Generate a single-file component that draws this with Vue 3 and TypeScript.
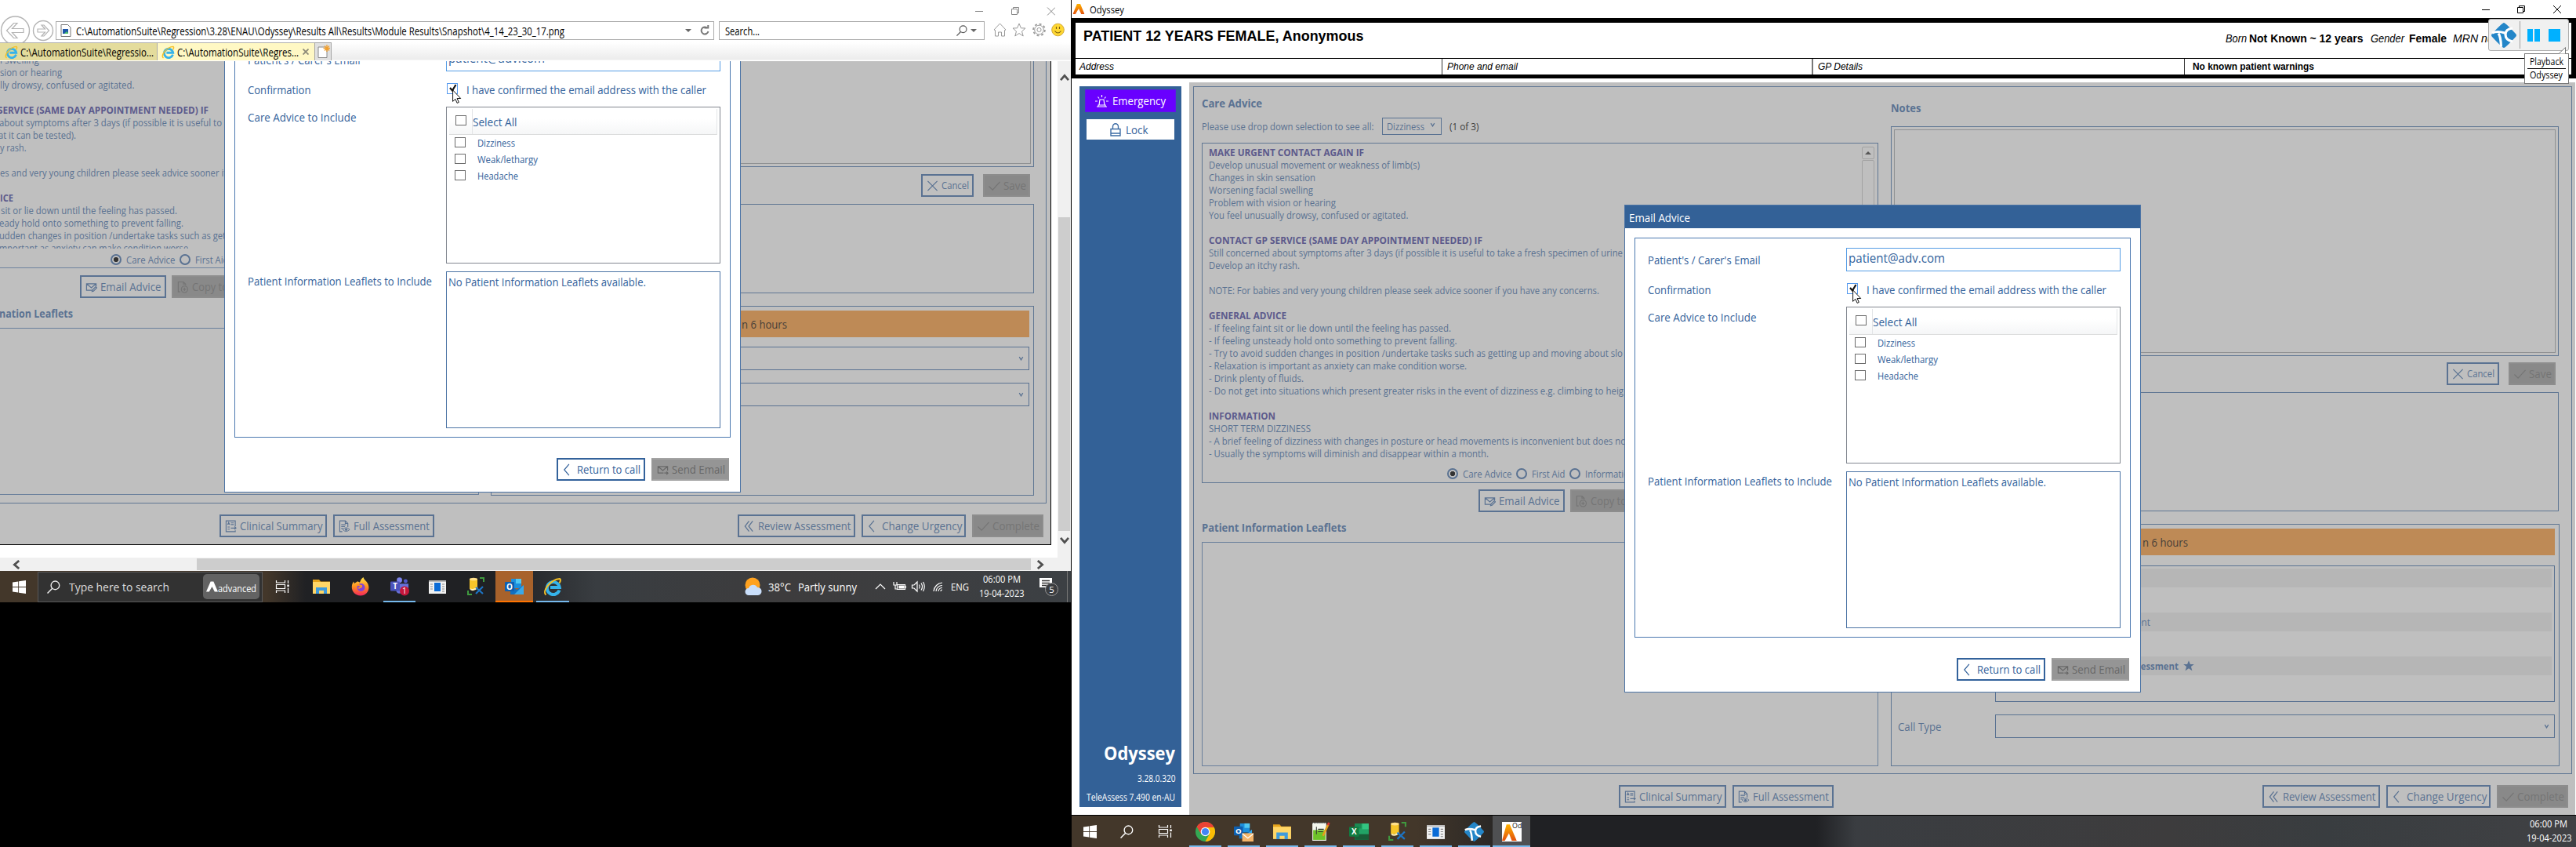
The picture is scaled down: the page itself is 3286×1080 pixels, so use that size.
<script setup lang="ts">
interface Line { t: string; w?: number; b?: boolean; x?: number }
interface Btn { icon: string; t: string; w: number; tw: number; off?: boolean }
interface Task { icon: string; w: number; u?: boolean; active?: boolean; cls?: string }

// Condenses or widens a label so that it takes up exactly the given width.
const vFit = {
  mounted(el: HTMLElement, { value }: { value?: number }) {
    if (!value) return
    el.style.display = 'inline-block'
    const now = el.getBoundingClientRect().width
    el.style.transformOrigin = '0 50%'
    el.style.transform = `scaleX(${value / now})`
    el.style.marginRight = `${parseFloat(getComputedStyle(el).marginRight) + value - now}px`
  },
}

const advice: Line[] = [
  { t: 'MAKE URGENT CONTACT AGAIN IF', w: 198, b: true },
  { t: 'Develop unusual movement or weakness of limb(s)', w: 269 },
  { t: 'Changes in skin sensation', w: 136 },
  { t: 'Worsening facial swelling', w: 133 },
  { t: 'Problem with vision or hearing', w: 162 },
  { t: 'You feel unusually drowsy, confused or agitated.', w: 254.5 },
  { t: '' },
  { t: 'CONTACT GP SERVICE (SAME DAY APPOINTMENT NEEDED) IF', w: 349, b: true },
  { t: 'Still concerned about symptoms after 3 days (if possible it is useful to take a fresh specimen of urine', w: 528 },
  { t: 'Develop an itchy rash.', w: 116 },
  { t: '' },
  { t: 'NOTE: For babies and very young children please seek advice sooner if you have any concerns.', w: 498 },
  { t: '' },
  { t: 'GENERAL ADVICE', w: 99, b: true },
  { t: '- If feeling faint sit or lie down until the feeling has passed.', w: 309 },
  { t: '- If feeling unsteady hold onto something to prevent falling.', w: 316.5 },
  { t: '- Try to avoid sudden changes in position /undertake tasks such as getting up and moving about slo', w: 528 },
  { t: '- Relaxation is important as anxiety can make condition worse.', w: 329 },
  { t: '- Drink plenty of fluids.', w: 121 },
  { t: '- Do not get into situations which present greater risks in the event of dizziness e.g. climbing to heig', w: 529 },
  { t: '' },
  { t: 'INFORMATION', w: 85, b: true },
  { t: 'SHORT TERM DIZZINESS', w: 130 },
  { t: '- A brief feeling of dizziness with changes in posture or head movements is inconvenient but does no', w: 532 },
  { t: '- Usually the symptoms will diminish and disappear within a month.', w: 357 },
]
const snap: Line[] = [
  { t: 'l swelling', w: 50, x: 0 },
  { t: 'sion or hearing', w: 79, x: 0 },
  { t: 'lly drowsy, confused or agitated.', w: 171.5, x: 0 },
  { t: '' },
  { t: 'SERVICE (SAME DAY APPOINTMENT NEEDED) IF', w: 269, b: true, x: -3 },
  { t: 'about symptoms after 3 days (if possible it is useful to', w: 284, x: -1 },
  { t: 'at it can be tested).', w: 99, x: -2 },
  { t: 'y rash.', w: 33.5, x: 0 },
  { t: '' },
  { t: 'es and very young children please seek advice sooner if', w: 289, x: 0 },
  { t: '' },
  { t: 'ICE', w: 17, b: true, x: 0 },
  { t: 'sit or lie down until the feeling has passed.', w: 225, x: 1 },
  { t: 'eady hold onto something to prevent falling.', w: 235, x: -1 },
  { t: 'udden changes in position /undertake tasks such as get', w: 289, x: -1 },
  { t: 'mportant as anxiety can make condition worse.', w: 244, x: -1 },
]
const footL: Btn[] = [
  { icon: 'summary', t: 'Clinical Summary', w: 137, tw: 105.5 },
  { icon: 'full', t: 'Full Assessment', w: 129, tw: 97 },
]
const footR: Btn[] = [
  { icon: 'dbl', t: 'Review Assessment', w: 150, tw: 118.5 },
  { icon: 'chev', t: 'Change Urgency', w: 133, tw: 102.5 },
  { icon: 'check', t: 'Complete', w: 91, tw: 60, off: true },
]
const noteBtns: Btn[] = [
  { icon: 'x', t: 'Cancel', w: 67, tw: 35 },
  { icon: 'check', t: 'Save', w: 60, tw: 29, off: true },
]
const advBtns: Btn[] = [
  { icon: 'mailedit', t: 'Email Advice', w: 110, tw: 77.5 },
  { icon: 'copy', t: 'Copy to', w: 90, tw: 46, off: true },
]
const modalBtns: Btn[] = [
  { icon: 'chev', t: 'Return to call', w: 113, tw: 81 },
  { icon: 'send', t: 'Send Email', w: 99, tw: 68, off: true },
]
const items: Line[] = [
  { t: 'Dizziness', w: 48 },
  { t: 'Weak/lethargy', w: 77 },
  { t: 'Headache', w: 52 },
]
const modals = ['snapshot', 'live']
const tasksL: Task[] = [
  { icon: 'taskview', w: 50 },
  { icon: 'folder', w: 50 },
  { icon: 'firefox', w: 50 },
  { icon: 'teams', w: 49, u: true },
  { icon: 'winapp', w: 48 },
  { icon: 'dbtool', w: 50 },
  { icon: 'outlook', w: 48, cls: 'alert' },
  { icon: 'ie', w: 50, u: true },
]
const tasksR: Task[] = [
  { icon: 'chrome', w: 49, u: true },
  { icon: 'outlookmail', w: 49, u: true },
  { icon: 'folder', w: 49, u: true },
  { icon: 'notepad', w: 49, u: true },
  { icon: 'excel', w: 49, u: true },
  { icon: 'dbtool', w: 49, u: true },
  { icon: 'winapp', w: 49, u: true },
  { icon: 'tc', w: 49, u: true },
  { icon: 'odyssey', w: 48, cls: 'current' },
]
</script>

<template>
  <div class="desk">
    <svg class="defs" width="0" height="0">
      <defs>
        <linearGradient id="orangeG" x1="0" y1="0" x2="0" y2="1"><stop offset="0" stop-color="#ffb400" /><stop offset="1" stop-color="#e2500d" /></linearGradient>
        <linearGradient id="fireG" x1="0" y1="0" x2="0" y2="1"><stop offset="0" stop-color="#ffe14a" /><stop offset=".5" stop-color="#ff9220" /><stop offset="1" stop-color="#f5255c" /></linearGradient>
        <symbol id="i-mailedit" viewBox="0 0 16 16"><path d="M9 12.5H1.5v-9h13V7M1.5 3.5 8 9l6.500-5.500M9 14l.5-2 4.500-4.500 1.500 1.500-4.500 4.500z" fill="none" stroke="currentColor" stroke-width="1.300" /></symbol>
        <symbol id="i-send" viewBox="0 0 16 16"><path d="M9 12.500H1.500v-9h13V9M1.500 3.500 8 9l6.500-5.500M10 12.500h5M13 10.500l2 2-2 2" fill="none" stroke="currentColor" stroke-width="1.300" /></symbol>
        <symbol id="i-copy" viewBox="0 0 16 16"><path d="M4 14.500H1.500V1h7l3 3v1.500M8.500 1v3h3" fill="none" stroke="currentColor" stroke-width="1.200" /><circle cx="10" cy="11" r="4.400" fill="none" stroke="currentColor" stroke-width="1.200" /><path d="M10 8.800v4.400M7.800 11h4.400" stroke="currentColor" stroke-width="1.200" /></symbol>
        <symbol id="i-summary" viewBox="0 0 16 16"><path d="M14 8V.700H1.500v14.600H14V13.500M3.500 6 5 2.800 6.500 6M4 5h2M8 3.500h4M8 5.700h4M3.500 9h3M3.500 12h3M8 10.500h7M13 8.500l2 2-2 2" fill="none" stroke="currentColor" stroke-width="1.200" /></symbol>
        <symbol id="i-full" viewBox="0 0 16 16"><path d="M5 15.300H1.500V.700h7.500l3.500 3.500V9M9 .700v3.500h3.500M3.500 6h6M3.500 8.500h5M3.500 11h2.500" fill="none" stroke="currentColor" stroke-width="1.200" /><path d="M5.500 12.500q4.500-5 9.500 0q-5 5-9.500 0z" fill="none" stroke="currentColor" /><circle cx="10.200" cy="12.500" r="1.700" fill="currentColor" /></symbol>
        <symbol id="i-dbl" viewBox="0 0 16 16"><path d="M8 1 2.500 8 8 15M13 1 7.500 8l5.500 7" fill="none" stroke="currentColor" stroke-width="1.300" /></symbol>
        <symbol id="i-chev" viewBox="0 0 16 16"><path d="M9.500.500 3 8l6.500 7.500" fill="none" stroke="currentColor" stroke-width="1.300" /></symbol>
        <symbol id="i-check" viewBox="0 0 16 16"><path d="M.5 8.500 5.500 13.500 15.500 2.500" fill="none" stroke="currentColor" stroke-width="1.300" /></symbol>
        <symbol id="i-x" viewBox="0 0 16 16"><path d="M1.500 1.500l13 13M14.500 1.500l-13 13" fill="none" stroke="currentColor" stroke-width="1.300" /></symbol>
        <symbol id="i-a" viewBox="0 0 16 16"><path d="M5.700 1h4.500L16 15h-4.500L8 7.500 3.500 15H0z" fill="url(#orangeG)" /></symbol>
        <symbol id="i-ie" viewBox="0 0 24 24"><path d="M20.500 16.500A8 8 0 1 1 20.800 13H9" fill="none" stroke="#35b3ea" stroke-width="4" /><path d="M3.500 22.500C-2 18 9 3 21 2c2 1 .5 4-.5 5.500" fill="none" stroke="#f5c026" stroke-width="2" /></symbol>
        <symbol id="i-start" viewBox="0 0 16 16"><path d="M0 2.300 6.800 1.300V7.600H0zM7.600 1.200 16 0V7.600H7.600zM0 8.400h6.800v6.300L0 13.700zM7.600 8.400H16V16l-8.400-1.200z" fill="#fff" /></symbol>
        <symbol id="i-mag" viewBox="0 0 16 16"><circle cx="9.800" cy="6" r="5" fill="none" stroke="currentColor" stroke-width="1.300" /><path d="M6.300 9.700.500 15.500" stroke="currentColor" stroke-width="1.400" /></symbol>
        <symbol id="i-taskview" viewBox="0 0 24 24"><path d="M4.500 4v3h11V4M4.500 20v-3h11v3M4.500 9.500h11v5h-11zM19.500 4v4M19.500 13.500V20" fill="none" stroke="#fff" stroke-width="1.200" /><rect x="18.300" y="9.500" width="2.500" height="2.500" fill="#fff" /></symbol>
        <symbol id="i-folder" viewBox="0 0 24 24"><path d="M1 3h8l2 2.500h12V8H1z" fill="#e6a41c" /><path d="M1 6h22v15H1z" fill="#ffd667" /><path d="M5 21v-8h14v8h-4v-4H9v4z" fill="#3f9bdc" /></symbol>
        <symbol id="i-firefox" viewBox="0 0 24 24"><path d="M12 23.500C5 23.500.500 18 .800 12c.100-3 1.500-5.500 2.200-6.500l1 2.500 3-2c1-1 2 0 4 .500C12 3 14 1 15.500 0c.500 3 3.500 4.500 5 7 5 8-.500 16.500-8.500 16.500z" fill="url(#fireG)" /><circle cx="12.500" cy="13" r="5" fill="#8042d8" /><path d="M7 10c3-1 4 1 6 1 1 2-3 1.500-3.500 3.500" fill="none" stroke="#ff9220" stroke-width="2" /></symbol>
        <symbol id="i-teams" viewBox="0 0 26 26"><circle cx="12.500" cy="4" r="3.700" fill="#7b83eb" /><circle cx="21" cy="5.500" r="2.700" fill="#5059c9" /><path d="M8 9h17v8q-3 6-9 5Q8 24 8 18z" fill="#6670d8" /><rect x="0" y="6" width="13" height="13" rx="1" fill="#4b53bc" /><text x="6.500" y="16.300" font-family="Open Sans, sans-serif" font-weight="700" font-size="10.500" text-anchor="middle" fill="#fff">T</text><circle cx="19.500" cy="19" r="6.500" fill="#c4163a" /><text x="19.500" y="23" font-family="Open Sans, sans-serif" font-size="11" text-anchor="middle" fill="#fff">1</text></symbol>
        <symbol id="i-winapp" viewBox="0 0 24 24"><path d="M1 4h22v17H1z" fill="#f2f2f2" /><path d="M1 4h22v2H1z" fill="#bbb" /><path d="M8 7h8v11H8z" fill="#0a6bd6" /><path d="M3 9h3M3 12h3M3 15h3M18 9h3M18 12h3M18 15h3M18 18h3" stroke="#888" /></symbol>
        <symbol id="i-dbtool" viewBox="0 0 24 24"><path d="M4 2h10v13H4z" fill="#f6c529" /><ellipse cx="9" cy="2.500" rx="5" ry="1.800" fill="#ffe08a" /><path d="M5 15q4 3 9-2" stroke="#fff1b8" stroke-width="2" fill="none" /><path d="M17 1h5v5M2 17v5h5" fill="none" stroke="#3f9a3f" stroke-width="2" /><path d="m12 13 9 8M21 12l-9 9" stroke="#1d74c4" stroke-width="2.200" /></symbol>
        <symbol id="i-outlook" viewBox="0 0 24 24"><path d="M8 2h13v12H8z" fill="#1c8fdc" /><path d="M14 2h7v6h-7z" fill="#50c8f2" /><path d="M7 11l8.500 5L24 10v12H7z" fill="#1170c2" /><path d="M24 10v12H12z" fill="#39a9ea" /><rect x="0" y="6" width="12" height="12" rx="1" fill="#0f5fb0" /><text x="6" y="15.500" font-family="Open Sans, sans-serif" font-weight="700" font-size="10" text-anchor="middle" fill="#fff">O</text></symbol>
        <symbol id="i-outlookmail" viewBox="0 0 26 26"><svg x="0" y="0" width="24" height="24" viewBox="0 0 24 24"><use href="#i-outlook" /></svg><path d="M11 15h15v11H11z" fill="#f4b469" /><path d="M11 15.500l7.500 6 7.500-6" fill="none" stroke="#fff" stroke-width="1.300" /></symbol>
        <symbol id="i-chrome" viewBox="0 0 24 24"><circle cx="12" cy="12" r="12" fill="#34a853" /><path d="M12 12 1.600 6A12 12 0 0 1 22.400 6z" fill="#ea4335" /><path d="M12 6.500h10.700A12 12 0 0 1 12 24l5-9z" fill="#fbbc05" /><path d="M1.600 6 7 15l5-8.500H22.400A12 12 0 0 0 1.600 6z" fill="#ea4335" /><circle cx="12" cy="12" r="5.600" fill="#fff" /><circle cx="12" cy="12" r="4.400" fill="#4285f4" /></symbol>
        <symbol id="i-notepad" viewBox="0 0 24 24"><path d="M2 1h17v22H2z" fill="#f4f7ee" /><path d="M3 10h15v12H3z" fill="#6ec328" /><path d="M2 1h17" stroke="#444" stroke-dasharray="1 1" stroke-width="2" /><path d="M7 6v9M9 9h7M9 12h6" stroke="#333" /><path d="M21.500 3 15 17" stroke="#e5a01c" stroke-width="2.500" /><path d="M22.500 1 21 4" stroke="#d33" stroke-width="2.500" /></symbol>
        <symbol id="i-excel" viewBox="0 0 24 24"><path d="M7 2h17v20H7z" fill="#21a366" /><path d="M7 2h8v6H7z" fill="#1a8a53" /><path d="M16 2h8v7h-8z" fill="#33c481" /><path d="M7 15h17v7H7z" fill="#185c37" /><rect x="0" y="6" width="12" height="12" rx="1" fill="#107c41" /><text x="6" y="15.300" font-family="Open Sans, sans-serif" font-weight="700" font-size="9.500" text-anchor="middle" fill="#fff">X</text></symbol>
        <symbol id="i-tc" viewBox="0 0 32 32"><path d="M16 0Q18 0 31 14q2 2 0 4Q18 32 16 32T1 18q-2-2 0-4Q14 0 16 0z" fill="#2486c8" /><path d="M1 13q7-3 16 0M9 13.500q3 4 3.500 17M27 7q-9 1-9 8t9 9" fill="none" stroke="#fff" stroke-width="3.200" /></symbol>
        <symbol id="i-odyssey" viewBox="0 0 24 24"><path d="M0 0h24v24H0z" fill="#fff" /><path d="M5.500 3h4L18 23h-6L8.500 14 3.500 23H0z" fill="url(#orangeG)" /><text x="12.500" y="8" font-family="Open Sans, sans-serif" font-size="8.500" fill="#222">Od</text></symbol>
        <symbol id="i-down" viewBox="0 0 8 8"><path d="M1 1.500 4 6.500 7 1.500" fill="none" stroke="currentColor" stroke-width="1.700" /></symbol>
        <symbol id="i-arr" viewBox="0 0 12 12"><path d="M1 9.200 6 3.400l5 5.800" fill="none" stroke="#505050" stroke-width="2.800" /></symbol>
        <symbol id="i-cursor" viewBox="0 0 12 19"><path d="M.6.900v14.500l3.300-3.100 2.200 5.100 2.200-1-2.200-4.900h4.600z" fill="#fff" stroke="#111" stroke-width="1" /></symbol>
      </defs>
    </svg>

    <!-- snapshot viewer on the small monitor -->
    <section class="mon1">
      <header class="ie-top">
        <svg class="nav" width="70" height="54" viewBox="0 0 70 54" fill="none" stroke="#b4b4b4"><circle cx="19.500" cy="39" r="18" stroke-width="1.400" /><circle cx="55" cy="39" r="12.500" stroke-width="1.400" /><path d="M8.500 39l9-9.500h4.500l-6.500 7H30v5H15.500l6.500 7h-4.500zM62.500 39l-6.500-7h-3l4.500 5H48v4h9.500l-4.500 5h3z" stroke-width="1.200" /></svg>
        <div class="addr">
          <svg width="14" height="16" viewBox="0 0 14 16"><path d="M1 .500h8.500l3.500 3.500v11.500H1z" fill="#fff" stroke="#777" /><path d="M3 6h7v6H3z" fill="#1d56a8" /><path d="M5 12l3-3 2 2v1z" fill="#4fc36a" /></svg>
          <span v-fit="623" class="u15">C:\AutomationSuite\Regression\3.28\ENAU\Odyssey\Results All\Results\Module Results\Snapshot\4_14_23_30_17.png</span>
          <i class="tri"></i>
          <svg width="12" height="14" viewBox="0 0 12 14"><path d="M9.500 4A4.500 4.500 0 1 0 10.500 8M5.500 3.500h4.800V0" fill="none" stroke="#777" stroke-width="2" /></svg>
        </div>
        <div class="find"><span v-fit="44" class="u15">Search...</span><svg width="14" height="14" viewBox="0 0 16 16" color="#555"><use href="#i-mag" /></svg><i class="tri"></i></div>
        <div class="ie-right">
          <svg width="116" height="20" viewBox="0 0 116 20"><path d="M14 7.500h10" stroke="#888" fill="none" /><path d="M60.500 4.500h7v7h-7zM62.500 4.500v-2h7v7h-2M106 2.500l10 10M116 2.500l-10 10" fill="none" stroke="#888" /></svg>
          <svg width="92" height="20" viewBox="0 0 92 20" fill="none" stroke="#999"><path d="M1 10 8.500 2 16 10l-1.500.500V18h-4v-5h-4v5h-4v-7.500zM33 2l2.400 5.800 5.600.200-4.500 4 1.700 6-5.200-3.500-5.200 3.500 1.700-6-4.500-4 5.600-.200z" /><circle cx="58.500" cy="10" r="5.800" /><circle cx="58.500" cy="10" r="2.600" /><circle cx="58.500" cy="10" r="7.400" stroke-dasharray="2.900 2.900" stroke-width="1.800" /><circle cx="82.500" cy="10" r="7.800" fill="#ffd832" stroke="#d2a93a" /><path d="M80.500 6v3M84.500 6v3M78.500 11.500q4 5 8 0" stroke="#7a5c10" stroke-width="1.200" /></svg>
        </div>
      </header>
      <div class="tabs">
        <div class="tab t1"><svg width="17" height="17" viewBox="0 0 24 24"><use href="#i-ie" /></svg><span v-fit="170" class="u15">C:\AutomationSuite\Regressio...</span></div>
        <div class="tab t2"><svg width="17" height="17" viewBox="0 0 24 24"><use href="#i-ie" /></svg><span v-fit="155" class="u15">C:\AutomationSuite\Regres...</span><svg class="cx" width="8" height="8" viewBox="0 0 8 8"><path d="M.500.500l7 7M7.500.500l-7 7" stroke="#8d8a78" stroke-width="1.800" /></svg></div>
        <div class="tab t3"><svg width="16" height="18" viewBox="0 0 16 18"><path d="M1 3h9l2 2v11.500H1z" fill="#fff" stroke="#888" /><path d="M12 0v9M7.500 4.500h9M9 1.500l6 6M15 1.500l-6 6" stroke="#f0a030" stroke-width="1.300" /></svg></div>
      </div>
      <div class="ie-body">
        <div class="shot">
          <div class="spanel">
            <div class="sl">
              <div class="sbox1">
                <div class="stext"><p v-for="(l, i) in snap" :key="i" :class="{ b: l.b }"><span v-fit="l.w" :style="{ marginLeft: (l.x || 0) + 'px' }">{{ l.t }}</span></p></div>
                <div class="radios s"><i class="rd on"></i><span v-fit="62.500">Care Advice</span><i class="rd"></i><span v-fit="42.500">First Aid</span></div>
              </div>
              <div class="btns sadv"><div v-for="b in advBtns" :key="b.t" class="btn dim" :class="{ off: b.off }" :style="{ width: b.w + 'px' }"><svg><use :href="'#i-' + b.icon" /></svg><span v-fit="b.tw">{{ b.t }}</span></div></div>
              <div class="sh"><span v-fit="94">nation Leaflets</span></div>
              <div class="sbox2"></div>
            </div>
            <div class="sr">
              <div class="snote"><div></div></div>
              <div class="btns snb"><div v-for="b in noteBtns" :key="b.t" class="btn dim" :class="[b.icon, { off: b.off }]" :style="{ width: b.w + 'px' }"><svg><use :href="'#i-' + b.icon" /></svg><span v-fit="b.tw">{{ b.t }}</span></div></div>
              <div class="sbox3"></div>
              <div class="sbox4">
                <div class="orange"><span v-fit="58">n 6 hours</span></div>
                <div class="combo"><svg><use href="#i-down" /></svg></div>
                <div class="combo c2"><svg><use href="#i-down" /></svg></div>
              </div>
            </div>
          </div>
          <div class="foot sf">
            <div class="btns"><div v-for="b in footL" :key="b.t" class="btn dim" :style="{ width: b.w + 'px' }"><svg><use :href="'#i-' + b.icon" /></svg><span v-fit="b.tw">{{ b.t }}</span></div></div>
            <div class="btns"><div v-for="b in footR" :key="b.t" class="btn dim" :class="{ off: b.off }" :style="{ width: b.w + 'px' }"><svg><use :href="'#i-' + b.icon" /></svg><span v-fit="b.tw">{{ b.t }}</span></div></div>
          </div>
        </div>
        <div class="vscroll"><svg><use href="#i-arr" /></svg><div></div><svg class="dn"><use href="#i-arr" /></svg></div>
      </div>
      <div class="hscroll"><svg class="lf"><use href="#i-arr" /></svg><div></div><svg class="rt"><use href="#i-arr" /></svg></div>
      <div class="bar bar1">
        <div class="start"><svg width="17" height="17"><use href="#i-start" /></svg></div>
        <div class="sbar"><svg width="17" height="17"><use href="#i-mag" /></svg><span v-fit="128">Type here to search</span><div class="pill"><svg width="15" height="14" viewBox="0 0 16 14"><path d="M6 0h4l6 14h-4.500L8 7l-4 7H0z" fill="#fff" /></svg><b v-fit="49">advanced</b></div></div>
        <div v-for="k in tasksL" :key="k.icon" class="task" :class="[k.cls, { u: k.u }]" :style="{ width: k.w + 'px' }"><svg width="24" height="24"><use :href="'#i-' + k.icon" /></svg></div>
        <div class="tray">
          <svg width="24" height="24" viewBox="0 0 24 24"><circle cx="11" cy="10" r="9.500" fill="#ffa21f" /><path d="M6 23a4.500 4.500 0 0 1 0-9 6 6 0 0 1 11-1 5 5 0 0 1 1 10z" fill="#c9defa" /></svg>
          <span v-fit="29" class="w1">38°C</span><span v-fit="75" class="w2">Partly sunny</span>
          <svg class="sys" width="90" height="20" viewBox="0 0 90 20" fill="none" stroke="#fff" stroke-width="1.200"><path d="M1 13l6-6 6 6" /><path d="M28.500 7.500h10v6h-10zM39.500 9.500v2M24 4v4h4V4M26 8v5h2" /><path d="M31 9h6v3h-6z" fill="#fff" /><path d="M47.500 8v4h2.500l4 4V4L50 8zM56.500 7.500q1.500 2.500 0 5M59 5.500q3 4.500 0 9M61.500 4q3.500 6 0 12" /><path d="M75 16a12 12 0 0 1 11-11M78 16a8 8 0 0 1 8-7.500M81 16a5 5 0 0 1 5-4.500M84 16a2 2 0 0 1 2-2" /></svg>
          <span v-fit="23" class="eng">ENG</span>
          <div class="clock"><span v-fit="48">06:00 PM</span><span v-fit="57.500">19-04-2023</span></div>
          <svg class="nt" width="26" height="28" viewBox="0 0 26 28"><path d="M1 3h16v12h-5v4l-4-4H1z" fill="#fff" /><path d="M4 6.500h10M4 9.500h10M4 12.500h7" stroke="#333" stroke-width="1.300" /><circle cx="16.500" cy="17.500" r="8" fill="#3a3c3f" stroke="#999" /><text x="16.500" y="22" font-size="11.500" text-anchor="middle" fill="#fff" font-family="Open Sans, sans-serif">5</text></svg>
        </div>
      </div>
    </section>

    <!-- live application on the main monitor -->
    <section class="mon2">
      <div class="title"><svg width="16" height="15" viewBox="0 0 16 16"><use href="#i-a" /></svg><span v-fit="44">Odyssey</span>
        <svg class="wc" width="110" height="20" viewBox="0 0 110 20" fill="none" stroke="#000"><path d="M1 10.500h10M46.500 7.500h7v7h-7zM48.500 7.500v-2h7v7h-2M92 5l10 10M102 5l-10 10" /></svg>
      </div>
      <div class="banner">
        <div class="b1"><b v-fit="357.500" class="pt">PATIENT 12 YEARS FEMALE, Anonymous</b>
          <div class="demo"><em v-fit="27">Born</em><b v-fit="145.500">Not Known ~ 12 years</b><em v-fit="43" class="g">Gender</em><b v-fit="48" class="f">Female</b><em v-fit="84" class="g2">MRN number</em></div></div>
        <div class="b2"><div class="c1"><em v-fit="44">Address</em></div><div class="c2"><em v-fit="90">Phone and email</em></div><div class="c3"><em v-fit="57">GP Details</em></div><div class="c4"><b v-fit="155">No known patient warnings</b></div></div>
      </div>
      <div class="work">
        <aside>
          <div class="emer"><svg width="17" height="16" viewBox="0 0 17 16" fill="none" stroke="#fff" stroke-width="1.200"><path d="M2 15h13M4 15v-2h9v2M5 13l1-7h5l1 7M8.500 0v3M3.500 2.500l1.500 2M13.500 2.500l-1.500 2M0 8h3M14 8h3" /></svg><span v-fit="68">Emergency</span></div>
          <div class="lock"><svg width="14" height="17" viewBox="0 0 14 17" fill="none" stroke="#3d6ca5" stroke-width="1.400"><path d="M1 7.500h12V16H1zM3.500 7.500V4.500a3.500 3.800 0 0 1 7 0v3M1 13h12" /></svg><span v-fit="28.500">Lock</span></div>
          <div class="ver"><b v-fit="91">Odyssey</b><span v-fit="48.500">3.28.0.320</span><span v-fit="113">TeleAssess 7.490 en-AU</span></div>
        </aside>
        <main>
          <div class="panel">
            <div class="pl">
              <div class="h1"><span v-fit="77">Care Advice</span></div>
              <div class="pick"><span v-fit="219.500">Please use drop down selection to see all:</span><div class="dd"><span v-fit="48">Dizziness</span><svg><use href="#i-down" /></svg></div><span v-fit="37.500" class="of">(1 of 3)</span></div>
              <div class="abox">
                <div class="arow"><div class="atext"><p v-for="(l, i) in advice" :key="i" :class="{ b: l.b }"><span v-fit="l.w">{{ l.t }}</span></p></div>
                  <div class="asb"><div class="up"><i></i></div><div class="tr"></div></div></div>
                <div class="radios"><i class="rd on"></i><span v-fit="62.500">Care Advice</span><i class="rd"></i><span v-fit="42.500">First Aid</span><i class="rd"></i><span v-fit="63">Information</span></div>
              </div>
              <div class="btns adv"><div v-for="b in advBtns" :key="b.t" class="btn dim" :class="{ off: b.off }" :style="{ width: b.w + 'px' }"><svg><use :href="'#i-' + b.icon" /></svg><span v-fit="b.tw">{{ b.t }}</span></div></div>
              <div class="h2"><span v-fit="184.500">Patient Information Leaflets</span></div>
              <div class="lbox"></div>
            </div>
            <div class="pr">
              <div class="h3"><span v-fit="38.500">Notes</span></div>
              <div class="nbox"><div></div></div>
              <div class="btns nb"><div v-for="b in noteBtns" :key="b.t" class="btn dim" :class="[b.icon, { off: b.off }]" :style="{ width: b.w + 'px' }"><svg><use :href="'#i-' + b.icon" /></svg><span v-fit="b.tw">{{ b.t }}</span></div></div>
              <div class="box2"></div>
              <div class="box3">
                <div class="orange"><span v-fit="58">n 6 hours</span></div>
                <div class="list"><div class="st"></div><div></div><div class="st"><span v-fit="18">ent</span></div><div></div><div class="st"><b v-fit="54">sessment</b><svg width="14" height="14" viewBox="0 0 14 14"><path d="M7 .300 8.900 5h4.900L9.900 8l1.500 5.300L7 10.200l-4.400 3.100L4.100 8 .200 5h4.900z" fill="#5a7292" /></svg></div></div>
                <div class="ct"><span v-fit="55.500">Call Type</span><div class="combo"><svg><use href="#i-down" /></svg></div></div>
              </div>
            </div>
          </div>
          <div class="foot mf">
            <div class="btns"><div v-for="b in footL" :key="b.t" class="btn dim" :style="{ width: b.w + 'px' }"><svg><use :href="'#i-' + b.icon" /></svg><span v-fit="b.tw">{{ b.t }}</span></div></div>
            <div class="btns"><div v-for="b in footR" :key="b.t" class="btn dim" :class="{ off: b.off }" :style="{ width: b.w + 'px' }"><svg><use :href="'#i-' + b.icon" /></svg><span v-fit="b.tw">{{ b.t }}</span></div></div>
          </div>
        </main>
      </div>
      <div class="bar bar2">
        <div class="start"><svg width="17" height="17"><use href="#i-start" /></svg></div>
        <div class="start sm"><svg width="17" height="17"><use href="#i-mag" /></svg></div>
        <div class="start tv"><svg width="24" height="24"><use href="#i-taskview" /></svg></div>
        <div v-for="k in tasksR" :key="k.icon" class="task" :class="[k.cls, { u: k.u }]" :style="{ width: k.w + 'px' }"><svg width="25" height="25"><use :href="'#i-' + k.icon" /></svg></div>
        <div class="clock"><span v-fit="48">06:00 PM</span><span v-fit="57.500">19-04-2023</span></div>
      </div>
    </section>

    <!-- e-mail dialog, drawn over each window -->
    <div v-for="m in modals" :key="m" class="clip" :class="m">
      <div class="modal">
        <div class="mh"><span v-fit="78">Email Advice</span></div>
        <div class="mb">
          <div class="r email"><label><span v-fit="143.500">Patient's / Carer's Email</span></label><div class="inp"><span v-fit="123">patient@adv.com</span></div></div>
          <div class="r conf"><label><span v-fit="80.500">Confirmation</span></label><div class="cb sel"><svg class="tick" width="12" height="11" viewBox="0 0 12 11"><path d="M2 5l3 3.500L9.500 1" fill="none" stroke="#111" stroke-width="2.200" /></svg><svg class="cur" width="12" height="19"><use href="#i-cursor" /></svg></div><span v-fit="306">I have confirmed the email address with the caller</span></div>
          <div class="r care"><label><span v-fit="138.500">Care Advice to Include</span></label>
            <div class="lst"><div class="lh"><div><i class="cb"></i></div><span v-fit="56.500">Select All</span></div>
              <div v-for="it in items" :key="it.t" class="li"><i class="cb"></i><span v-fit="it.w">{{ it.t }}</span></div></div></div>
          <div class="r leaf"><label><span v-fit="235">Patient Information Leaflets to Include</span></label><div class="pil"><span v-fit="252">No Patient Information Leaflets available.</span></div></div>
        </div>
        <div class="btns mf2"><div v-for="b in modalBtns" :key="b.t" class="btn" :class="{ off: b.off }" :style="{ width: b.w + 'px' }"><svg><use :href="'#i-' + b.icon" /></svg><span v-fit="b.tw">{{ b.t }}</span></div></div>
      </div>
    </div>

    <!-- playback recorder widget -->
    <div class="rec"><svg width="32" height="32"><use href="#i-tc" /></svg><div class="sep"></div><i class="ps"></i><i class="ps"></i><i class="stop"></i></div>
    <div class="tip"><svg width="10" height="9" viewBox="0 0 10 9"><path d="M0 8.500 8.500.500v8" fill="#fff" stroke="#777" /></svg><span v-fit="43">Playback</span><div></div><span v-fit="42">Odyssey</span></div>
  </div>
</template>

<style>
body { background: #000; }
</style>

<style scoped>
.desk { width: 3286px; height: 1080px; display: flex; background: #000; position: relative; overflow: hidden; font-family: "Open Sans", "Noto Sans", sans-serif; font-size: 14px; color: #33629b; white-space: nowrap; }
.desk * { box-sizing: border-box; }
.desk svg { flex: none; display: block; }
.desk span, .desk b, .desk em { flex: none; }
.defs { position: absolute; }
p { margin: 0; }
.u15 { font-size: 14.500px; color: #000; }

.mon1 { width: 1366px; height: 768px; background: #fff; flex: none; overflow: hidden; }
.ie-top { height: 54px; display: flex; }
.nav { margin-right: 1px; }
.addr { width: 840px; height: 24px; margin-top: 27px; border: 1px solid #ababab; display: flex; align-items: center; padding-left: 5px; }
.addr span { margin-left: 6px; }
.addr .tri { margin-left: auto; margin-right: 11px; }
.addr svg:last-child { margin-right: 5px; }
.tri { border: 4px solid transparent; border-top-color: #666; border-bottom: 0; width: 8px; height: 4px; flex: none; }
.find { width: 339px; height: 24px; margin: 27px 0 0 6px; border: 1px solid #ababab; display: flex; align-items: center; padding-left: 7px; }
.find svg { margin-left: auto; margin-right: 4px; }
.find .tri { margin-right: 9px; }
.ie-right { width: 109px; padding-top: 7px; display: flex; flex-direction: column; align-items: flex-start; }
.ie-right svg:first-child { margin-left: -26px; }
.ie-right svg:last-child { margin: 1px 0 0 11px; }
.tabs { height: 24px; display: flex; background: linear-gradient(#fff, #ececec 90%, #fff 96%); }
.tab { height: 23px; display: flex; align-items: center; padding-left: 6px; border-top: 1px solid #b0b0b0; }
.tab span { margin-left: 3px; }
.t1 { width: 200px; background: #e4dc9c; }
.t2 { width: 201px; background: #fff8c4; border-left: 1px solid #aaa; padding-left: 5px; }
.cx { margin-left: 5px; }
.t3 { width: 22px; background: #e0e0e0; border: 1px solid #a5a5a5; border-bottom: 0; padding-left: 3px; }
.ie-body { display: flex; height: 633px; }
.shot { width: 1341px; height: 617px; background: #bfbfbf; border-right: 1px solid #000; border-bottom: 1px solid #000; overflow: hidden; color: #5a7292; }
.spanel { width: 1335px; height: 564px; border: solid #5f7693; border-width: 0 1px 1px 0; display: flex; }
.sl { width: 611px; flex: none; }
.sbox1 { height: 264px; border-bottom: 1px solid #6f849f; }
.stext { height: 239px; overflow: hidden; font-size: 12.500px; }
.stext p { height: 16px; line-height: 16px; position: relative; top: -9px; }
.stext p, .atext p { display: flex; }
.b { font-weight: 700; color: #5c5a8c; font-size: 12px; }
.radios { display: flex; align-items: center; height: 22px; font-size: 12.500px; }
.radios.s { margin-left: 141px; margin-top: 3px; }
.rd { width: 14px; height: 14px; border: 2px solid #5a7292; border-radius: 50%; flex: none; margin-right: 6px; }
.rd.on { background: radial-gradient(#333 0 2.800px, transparent 3.500px); }
.radios span { margin-right: 5.500px; }
.btns { display: flex; gap: 8px; }
.btn { height: 29px; border: 2px solid #33629b; display: flex; align-items: center; flex: none; padding-left: 5px; }
.btn svg { width: 15px; height: 16px; margin-right: 4px; }
.btn.dim { border-color: #5a7292; color: #5a7292; }
.btn.off { background: #959595; border-color: #a3a3a3 #979797; color: #686868; }
.btn.dim.off { background: #898989; border: 2px solid #8d8d8d; color: #757575; }
.btn.x { font-size: 12.500px; }
.sadv { margin: 9px 0 0 102px; }
.adv, .sadv { gap: 7px; }
.sh { height: 38px; line-height: 39px; font-weight: 700; margin-left: -1px; }
.sbox2 { height: 213px; border: 1px solid #6a809c; border-left: 0; }
.sr { margin-left: 15px; width: 693px; }
.snote { height: 135px; border: solid #5f7693; border-width: 0 1px 1px 0; padding: 0 3px 3px 0; }
.snote div { height: 131px; border: solid #8f9193; border-width: 0 1px 1px 0; }
.snb { margin-top: 9px; height: 29px; justify-content: flex-end; padding-right: 5px; gap: 12px !important; }
.sbox3 { margin-top: 9px; height: 114px; border: 1px solid #5f7693; }
.sbox4 { margin-top: 16px; height: 242px; border: 1px solid #5f7693; padding: 5px; }
.orange { height: 34px; background: #be8a56; color: #474039; line-height: 36px; padding-left: 315px; }
.sbox4 .orange { padding-left: 314px; }
.combo { border: 1px solid #5a7292; height: 30px; display: flex; align-items: center; justify-content: flex-end; padding-right: 6px; color: #5a7292; }
.combo svg { width: 7px; height: 6px; }
.sbox4 .combo { margin-top: 12px; }
.sbox4 .c2 { margin-top: 16px; }
.foot { display: flex; justify-content: space-between; margin-top: 14px; }
.sf { padding: 0 9px 0 280px; }
.vscroll { width: 17px; margin-left: 8px; background: #f0f0f0; display: flex; flex-direction: column; align-items: center; }
.vscroll svg { width: 12px; height: 12px; margin-top: 15px; }
.vscroll div { width: 15px; height: 400px; margin-top: 172px; background: #cdcdcd; }
.vscroll .dn { transform: rotate(180deg); margin-top: 6px; }
.hscroll { height: 17px; background: #f0f0f0; display: flex; align-items: center; }
.hscroll svg { width: 12px; height: 12px; }
.hscroll .lf { transform: rotate(-90deg); margin-left: 15px; }
.hscroll div { width: 1064px; height: 15px; margin-left: 224px; background: #cdcdcd; }
.hscroll .rt { transform: rotate(90deg); margin-left: 6px; }
.bar { height: 40px; display: flex; align-items: center; color: #fff; }
.bar1 { background: linear-gradient(90deg, #43372a 0, #43372a 340px, #202124 390px, #202124 640px, #393d41 760px, #3d3c3d 1000px, #3c4044 1366px); }
.start { width: 48px; display: flex; justify-content: center; flex: none; }
.sbar { width: 287px; height: 39px; background: #323232; border: 1px solid #595959; display: flex; align-items: center; padding-left: 11px; color: #ededed; flex: none; font-size: 15px; }
.sbar > span { margin-left: 11px; color: #dcdcdc; }
.pill { width: 72px; height: 32px; margin-left: 43px; border-radius: 5px; background: #636363; display: flex; align-items: center; padding-left: 4px; font-size: 12px; }
.pill b { font-weight: 400; color: #fff; margin-top: 4px; }
.task { height: 40px; display: flex; align-items: center; justify-content: center; flex: none; position: relative; }
.task.u::after, .task.alert::after, .task.current::after { content: ""; position: absolute; left: 4px; right: 4px; bottom: 0; height: 2px; background: #76b9ed; }
.task.alert { background: #a8622b; }
.task.alert::after { left: 0; right: 0; background: #ff7300; }
.task.current { background: #4f5052; margin-left: -1px; }
.task.current::after { left: 0; right: 0; }
.tray { flex: 1; display: flex; align-items: center; padding-left: 219px; font-size: 14px; height: 40px; border-right: 1px solid #777; margin-right: 4px; }
.w1 { margin-left: 7px; }
.w2 { margin-left: 9px; }
.sys { margin-left: 23px; }
.eng { margin-left: 7px; font-size: 13px; }
.clock { display: flex; flex-direction: column; align-items: center; font-size: 12.500px; line-height: 18px; }
.tray .clock { margin-left: 13px; }
.nt { margin-left: 18px; }

.mon2 { width: 1920px; height: 1080px; background: #fff; flex: none; border-left: 1px solid #000; }
.title { height: 23px; display: flex; align-items: center; padding-left: 1px; color: #000; font-size: 12.500px; }
.title span { margin-left: 6px; margin-top: 2px; }
.wc { margin-left: auto; margin-right: 11px; }
.banner { height: 77px; border: solid #000; border-width: 6px 6px 5px 5px; color: #000; font-family: "Liberation Sans", Arial, sans-serif; }
.b1 { height: 45px; display: flex; line-height: 35px; }
.pt { font-size: 18px; margin-left: 10px; }
.demo { margin-left: 1099px; display: flex; font-size: 15px; line-height: 39px; }
.demo b { margin-left: 3px; }
.g { margin-left: 10px; }
.demo .f { margin-left: 6px; }
.g2 { margin-left: 8px; }
.b2 { height: 21px; border-top: 1px solid #000; display: flex; font-size: 13px; line-height: 20px; }
.b2 div { padding-left: 5px; }
.b2 .c1 { width: 467px; }
.b2 .c2 { width: 472px; border-left: 1px solid #333; padding-left: 6px; }
.b2 .c3 { width: 475px; border-left: 2px solid #777; padding-left: 6px; }
.b2 .c4 { border-left: 1px solid #333; padding-left: 10px; }
.work { height: 940px; display: flex; border-bottom: 1px solid #000; }
aside { width: 130px; height: 919px; margin: 10px 10px 0 10px; background: #336197; flex: none; display: flex; flex-direction: column; align-items: center; color: #fff; }
.emer { width: 116px; height: 29px; margin-top: 4px; background: #6900ff; border: 1px solid #5d16e8; display: flex; align-items: center; padding-left: 12px; gap: 5px; align-self: flex-start; margin-left: 7px; }
.lock { width: 112px; height: 26px; margin-top: 9px; background: #fff; color: #33629b; display: flex; align-items: center; padding-left: 30px; gap: 6px; }
.ver { margin-top: auto; align-self: stretch; display: flex; flex-direction: column; align-items: flex-end; padding-right: 8px; font-size: 12px; }
.ver b { font-size: 23px; line-height: 30px; margin-bottom: 6px; }
.ver span { line-height: 24px; }
main { width: 1768px; height: 934px; margin-top: 5px; padding-top: 5px; background: #bfbfbf; color: #5a7292; flex: none; }
.panel { width: 1759px; height: 877px; margin-left: 5px; border: 1px solid #5f7693; display: flex; padding-left: 10px; }
.pl { width: 863px; flex: none; }
.h1 { height: 39px; line-height: 42px; font-weight: 700; }
.pick { height: 22px; display: flex; align-items: center; font-size: 12.500px; }
.dd { width: 76px; height: 22px; border: 1px solid #5a7292; margin: 0 10px; display: flex; align-items: center; padding-left: 5px; }
.dd svg { width: 7px; height: 6px; margin: -4px 0 0 7px; }
.of { color: #3c3c3c; }
.abox { margin-top: 10px; height: 434px; border: 1px solid #5f7693; }
.arow { display: flex; justify-content: space-between; height: 410px; }
.atext { padding: 4px 0 0 8px; font-size: 12.500px; }
.atext p { height: 16px; line-height: 16px; }
.asb { width: 16px; margin: 4px 4px 0 0; }
.up { height: 16px; border: 1px solid #a2a2a2; border-radius: 2px; display: flex; align-items: center; justify-content: center; }
.up i { border: 4px solid transparent; border-bottom: 4px solid #555; border-top: 0; }
.tr { height: 380px; margin-top: 1px; border: 1px solid #a2a2a2; border-radius: 2px; }
.arow + .radios { margin-left: 312px; }
.adv { margin: 8px 0 0 353px; }
.h2 { height: 38px; line-height: 39px; font-weight: 700; }
.lbox { height: 286px; border: 1px solid #6a809c; }
.pr { width: 852px; margin-left: 16px; }
.h3 { height: 50px; line-height: 53px; font-weight: 700; }
.nbox { height: 293px; border: 1px solid #5f7693; padding: 3px; }
.nbox div { height: 285px; border: 1px solid #8f9193; }
.nb { height: 29px; margin-top: 8px; justify-content: flex-end; padding-right: 4px; gap: 12px !important; }
.box2 { height: 152px; margin-top: 9px; border: 1px solid #5f7693; }
.box3 { height: 309px; margin-top: 16px; width: 853px; border: 1px solid #5f7693; padding: 5px; }
.list { margin: 13px 0 0 127px; height: 174px; border: 1px solid #5a7292; padding: 3px; font-size: 12.500px; }
.list div { height: 28px; }
.list div:nth-child(2n) { height: 32px; }
.list .st { height: 24px; background: #b6b6b6; line-height: 25px; padding-left: 176px; display: flex; align-items: center; }
.st svg { margin-left: 6px; }
.ct { display: flex; align-items: center; margin-top: 16px; padding-left: 3px; }
.ct .combo { width: 714px; margin-left: auto; }
.mf { padding: 0 9px 0 548px; }
.bar2 { background: linear-gradient(90deg, #43372a 0, #43372a 440px, #202124 580px, #202124 950px, #3a3d41 1000px, #3d3c3d 1400px, #393d40 1600px, #404144 1920px); }
.sm { margin-left: -1px; }
.tv { width: 49px; }
.bar2 .start + .task { margin-left: 3px; }
.bar2 .start:first-child { width: 47px; }
.bar2 .clock { margin-left: auto; margin-right: 6px; }

.clip { position: absolute; overflow: hidden; width: 659px; }
.live { left: 2072px; top: 261px; height: 622px; }
.snapshot { left: 286px; top: 78px; height: 550px; }
.snapshot .modal { margin-top: -72px; }
.modal { width: 659px; height: 622px; background: #fff; border: 1px solid #4c74a5; }
.mh { height: 29px; background: #336197; color: #fff; line-height: 31px; padding-left: 5px; }
.mb { width: 633px; height: 510px; margin: 12px 0 0 12px; border: 1px solid #4c79b0; }
.r { display: flex; padding-left: 16px; }
.r label { width: 253px; flex: none; }
.email { height: 30px; margin-top: 12px; line-height: 31px; }
.inp { width: 350px; height: 30px; border: 1px solid #569de5; padding-left: 2px; font-size: 16.500px; line-height: 24px; }
.conf { height: 30px; margin-top: 8px; align-items: center; }
.cb { width: 14px; height: 13px; border: 1px solid #6b6b6b; background: #fff; position: relative; flex: none; display: block; }
.cb.sel { border-color: #5599ee; margin-left: 1px; margin-right: 11px; margin-top: -3px; }
.conf .cb { height: 14px; }
.tick { position: absolute; left: 1px; top: 0; }
.cur { position: absolute; left: 6px; top: 7px; }
.care { margin-top: 7px; }
.care label { line-height: 27px; }
.lst { width: 350px; height: 200px; border: 1px solid #828790; padding: 2px 3px; }
.lh { height: 33px; border-bottom: 1px solid #dcdddd; background: linear-gradient(#fff 40%, #f5f6f7); display: flex; align-items: center; line-height: 31px; border-right: 1px solid #e4e6e8; }
.lh div { width: 30px; height: 32px; border-right: 1px solid #e2e4e6; padding: 8px 0 0 8px; }
.li { height: 21px; display: flex; align-items: center; padding-left: 7px; font-size: 12.500px; }
.li .cb { margin-right: 15px; margin-top: -3px; }
.leaf { margin-top: 10px; }
.leaf label { line-height: 25px; }
.pil { width: 350px; height: 200px; border: 1px solid #4c74a5; padding-left: 2px; line-height: 25px; }
.mf2 { margin: 26px 0 0 423px; }

.rec { position: absolute; left: 3174px; top: 24px; width: 103px; height: 41px; background: #f0f0f0; border: 1px solid #adadad; border-radius: 3px; display: flex; align-items: center; padding-left: 3px; }
.sep { width: 1px; height: 35px; background: #a0a0a0; margin: 0 9px 0 4px; }
.ps { width: 7px; height: 16px; background: #00b0ff; margin-right: 2px; }
.stop { width: 15px; height: 16px; background: #00b0ff; margin-left: 9px; }
.tip { position: absolute; left: 3220px; top: 68px; width: 57px; height: 39px; background: #fff; border: 1px solid #777; color: #000; font-size: 12px; display: flex; flex-direction: column; align-items: flex-start; line-height: 16px; padding: 2px 0 0 6px; }
.tip svg { position: absolute; left: 43px; top: -9px; }
.tip div { width: 49px; height: 1px; background: #000; margin-left: -3px; flex: none; }
</style>
